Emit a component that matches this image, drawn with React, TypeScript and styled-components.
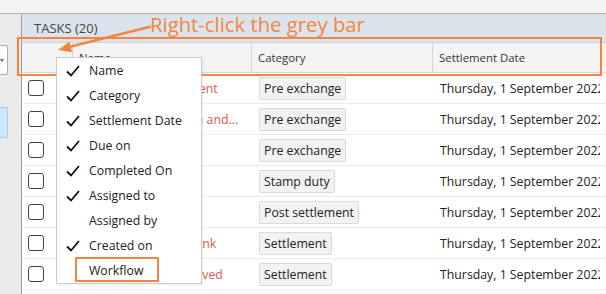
import React from 'react';
import styled, { createGlobalStyle } from 'styled-components';

const ORANGE = '#f5843f';
const FONT = `'Open Sans', 'Noto Sans', sans-serif`;

type Task = { name: string; category: string };

const tasks: Task[] = [
  { name: 'Sign transfer agreement', category: 'Pre exchange' },
  { name: 'Order final inspection and keys', category: 'Pre exchange' },
  { name: 'Order searches', category: 'Pre exchange' },
  { name: 'Pay stamp duty', category: 'Stamp duty' },
  { name: 'Notify council', category: 'Post settlement' },
  { name: 'Transfer money to bank', category: 'Settlement' },
  { name: 'Confirm deposit received', category: 'Settlement' },
  { name: 'Book settlement', category: 'Settlement' },
];

const menuItems = [
  { label: 'Name', checked: true },
  { label: 'Category', checked: true },
  { label: 'Settlement Date', checked: true },
  { label: 'Due on', checked: true },
  { label: 'Completed On', checked: true },
  { label: 'Assigned to', checked: true },
  { label: 'Assigned by', checked: false },
  { label: 'Created on', checked: true },
  { label: 'Workflow', checked: false, highlighted: true },
];

const App: React.FC = () => {
  return (
    <>
      <GlobalStyle />
      <Page>
        <TopStrip />
        <Body>
          <Sidebar>
            <SideDropdown />
            <SideSelected />
          </Sidebar>
          <Main>
            <TitleBar>TASKS (20)</TitleBar>
            <HeaderRow>
              <HeadCell />
              <HeadCell $divider>Name</HeadCell>
              <HeadCell $divider>Category</HeadCell>
              <HeadCell $divider>Settlement Date</HeadCell>
              <HeadCell />
            </HeaderRow>
            {tasks.map((t) => (
              <Row key={t.name}>
                <CheckCell>
                  <Checkbox />
                </CheckCell>
                <NameCell>{t.name}</NameCell>
                <CategoryCell>
                  <Tag>{t.category}</Tag>
                </CategoryCell>
                <DateCell>Thursday, 1 September 2022</DateCell>
                <span />
              </Row>
            ))}
          </Main>
        </Body>

        <HeaderHighlight />
        <Callout>Right-click the grey bar</Callout>
        <Arrow width="160" height="60" viewBox="0 0 160 60">
          <line x1="151" y1="26.5" x2="69" y2="47" stroke={ORANGE} strokeWidth="2.5" />
          <polygon points="58,50 69.4,41.8 72.2,52.2" fill={ORANGE} />
        </Arrow>

        <ContextMenu>
          {menuItems.map((m) => (
            <MenuItem key={m.label} $highlighted={m.highlighted}>
              <CheckSlot>
                {m.checked && (
                  <svg width="14" height="12" viewBox="0 0 14 12">
                    <polyline points="1,6.5 5,10.5 13,1" fill="none" stroke="#111" strokeWidth="1.8" />
                  </svg>
                )}
              </CheckSlot>
              {m.label}
            </MenuItem>
          ))}
        </ContextMenu>
      </Page>
    </>
  );
};

const GlobalStyle = createGlobalStyle`
  html, body {
    margin: 0;
    padding: 0;
    overflow: hidden;
    background: #ffffff;
  }
`;

const Page = styled.div`
  position: relative;
  width: 606px;
  height: 294px;
  overflow: hidden;
  font-family: ${FONT};
  color: #222;
  display: flex;
  flex-direction: column;
`;

const TopStrip = styled.div`
  height: 13px;
  flex-shrink: 0;
  background: #f3f3f3;
  border-bottom: 1px solid #b2b2b2;
`;

const Body = styled.div`
  flex: 1;
  display: flex;
  min-height: 0;
`;

const Sidebar = styled.div`
  width: 21px;
  flex-shrink: 0;
  background: #eaeaea;
  border-right: 1px solid #9c9c9c;
  display: flex;
  flex-direction: column;
  align-items: flex-start;
  padding-top: 31px;
  gap: 32px;
  box-sizing: content-box;
`;

const SideDropdown = styled.div`
  width: 8px;
  height: 30px;
  box-sizing: border-box;
  background: #fff;
  border: 1px solid #adadad;
  border-left: none;
  border-radius: 0 3px 3px 0;
  display: flex;
  align-items: center;

  &::before {
    content: '';
    border-left: 2.5px solid transparent;
    border-right: 2.5px solid transparent;
    border-top: 3px solid #666;
  }
`;

const SideSelected = styled.div`
  width: 8px;
  height: 31px;
  box-sizing: border-box;
  background: #cce8ff;
  border: 1px solid #99d1ff;
  border-left: none;
`;

const Main = styled.div`
  flex: 1;
  display: flex;
  flex-direction: column;
  min-width: 0;
`;

const TitleBar = styled.div`
  height: 28px;
  flex-shrink: 0;
  background: #dbe4ec;
  border-bottom: 1px solid #cdd3d9;
  padding-left: 12px;
  display: flex;
  align-items: center;
  font-size: 13px;
  color: #444;
`;

const columns = '50px 179px 181px 168px 1fr';

const HeaderRow = styled.div`
  display: grid;
  grid-template-columns: ${columns};
  height: 29px;
  flex-shrink: 0;
  background: #f4f4f4;
  border-bottom: 1px solid #d6d6d6;
`;

const HeadCell = styled.div<{ $divider?: boolean }>`
  display: flex;
  align-items: center;
  padding-left: 6px;
  font-size: 11.4px;
  color: #333;
  white-space: nowrap;
  overflow: hidden;
  border-left: ${(p) => (p.$divider ? '1px solid #d3d3d3' : 'none')};
`;

const Row = styled.div`
  display: grid;
  grid-template-columns: ${columns};
  height: 30px;
  flex-shrink: 0;
  border-bottom: 1px solid #ececec;
  align-items: center;
  font-size: 12.3px;
`;

const CheckCell = styled.div`
  padding-left: 6px;
  display: flex;
  align-items: center;
`;

const Checkbox = styled.div`
  width: 16px;
  height: 16px;
  box-sizing: border-box;
  border: 1px solid #444;
  border-radius: 3px;
  background: #fff;
`;

const NameCell = styled.div`
  padding: 0 10px 0 7px;
  color: #e0574a;
  white-space: nowrap;
  overflow: hidden;
  text-overflow: ellipsis;
`;

const CategoryCell = styled.div`
  padding-left: 8px;
  display: flex;
  align-items: center;
`;

const Tag = styled.span`
  height: 23px;
  box-sizing: border-box;
  padding: 0 4px;
  display: inline-flex;
  align-items: center;
  background: #f2f2f2;
  border: 1px solid #d9d9d9;
  border-radius: 2px;
  white-space: nowrap;
`;

const DateCell = styled.div`
  padding-left: 8px;
  white-space: nowrap;
  overflow: hidden;
`;

const HeaderHighlight = styled.div`
  position: absolute;
  left: 17px;
  top: 37px;
  width: 585px;
  height: 39px;
  box-sizing: border-box;
  border: 2px solid ${ORANGE};
  pointer-events: none;
`;

const Callout = styled.div`
  position: absolute;
  left: 150px;
  top: 11px;
  font-size: 20.3px;
  line-height: 26px;
  color: ${ORANGE};
  white-space: nowrap;
`;

const Arrow = styled.svg`
  position: absolute;
  left: 0;
  top: 0;
  overflow: visible;
`;

const ContextMenu = styled.div`
  position: absolute;
  left: 56px;
  top: 57px;
  width: 146px;
  box-sizing: border-box;
  background: #fff;
  border: 1px solid #cccccc;
  box-shadow: 1px 1px 2px rgba(0, 0, 0, 0.08);
  display: flex;
  flex-direction: column;
`;

const MenuItem = styled.div<{ $highlighted?: boolean }>`
  position: relative;
  height: 25px;
  display: flex;
  align-items: center;
  font-size: 12.3px;
  color: #222;
  white-space: nowrap;

  &::after {
    content: '';
    display: ${(p) => (p.$highlighted ? 'block' : 'none')};
    position: absolute;
    left: 18px;
    top: -1px;
    width: 84px;
    height: 25px;
    box-sizing: border-box;
    border: 2px solid ${ORANGE};
  }
`;

const CheckSlot = styled.span`
  width: 32px;
  padding-left: 9px;
  box-sizing: border-box;
  display: inline-flex;
  align-items: center;
`;

export default App;
